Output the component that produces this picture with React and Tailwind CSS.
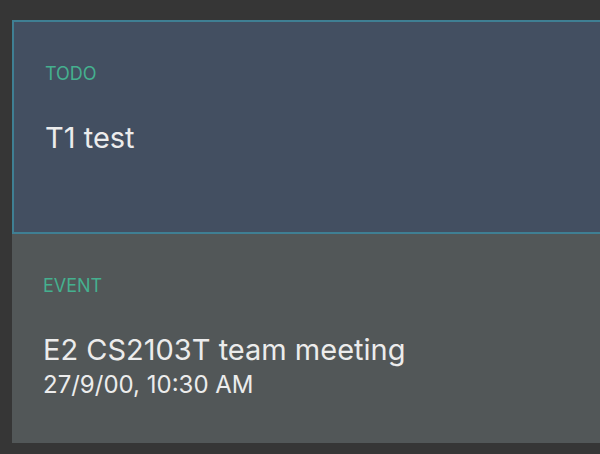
import React from 'react';

const ITEMS = [
  { id: 'T1', type: 'TODO', title: 'T1 test', active: true },
  { id: 'E2', type: 'EVENT', title: 'E2 CS2103T team meeting', when: '27/9/00, 10:30 AM' },
];

function ItemCard({ item }) {
  const base = 'w-[600px] shrink-0 px-[31px] pt-[41px]';
  const look = item.active
    ? 'h-[214px] border-2 border-[#3f7f93] bg-[#434f61]'
    : 'h-[209px] bg-[#525758]';
  return (
    <div className={`${base} ${look}`}>
      <div className="text-[18px] leading-[22px] text-[#45b08f]">{item.type}</div>
      <div className="mt-[35px] text-[29px] leading-[36px] text-[#ececec]">{item.title}</div>
      {item.when && (
        <div className="mt-[1px] text-[24px] leading-[32px] text-[#ececec]">{item.when}</div>
      )}
    </div>
  );
}

export default function App() {
  return (
    <div
      className="h-[454px] w-[600px] overflow-hidden bg-[#363636] pl-[12px] pt-[20px]"
      style={{ fontFamily: 'Inter, "Liberation Sans", sans-serif' }}
    >
      <div className="flex flex-col">
        {ITEMS.map((item) => (
          <ItemCard key={item.id} item={item} />
        ))}
      </div>
    </div>
  );
}
